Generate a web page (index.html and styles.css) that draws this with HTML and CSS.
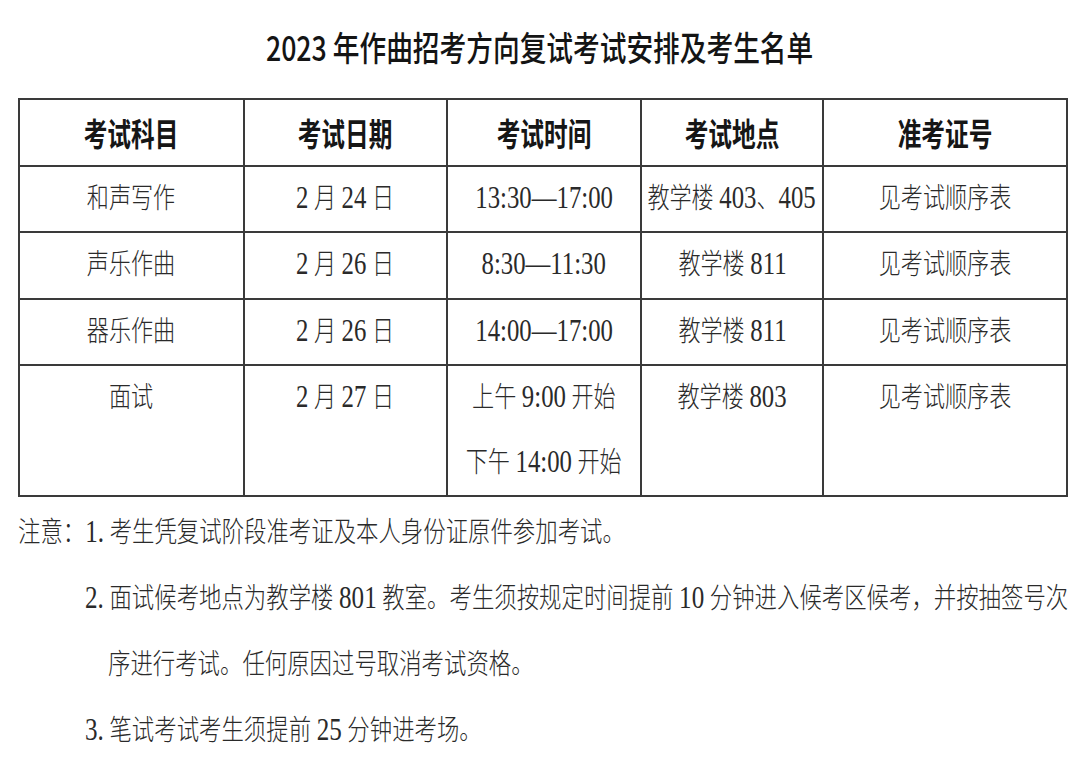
FILE: index.html
```html
<!DOCTYPE html>
<html lang="zh-CN">
<head>
<meta charset="utf-8">
<title>2023年作曲招考方向复试考试安排及考生名单</title>
<link rel="stylesheet" href="styles.css">
</head>
<body>
<div class="page">
  <h1 class="title"><span class="sq">2023 年作曲招考方向复试考试安排及考生名单</span></h1>
  <table class="sched">
    <colgroup>
      <col class="c1"><col class="c2"><col class="c3"><col class="c4"><col class="c5">
    </colgroup>
    <thead>
      <tr>
        <th><div class="cell"><span class="sq">考试科目</span></div></th>
        <th><div class="cell"><span class="sq">考试日期</span></div></th>
        <th><div class="cell"><span class="sq">考试时间</span></div></th>
        <th><div class="cell"><span class="sq">考试地点</span></div></th>
        <th><div class="cell"><span class="sq">准考证号</span></div></th>
      </tr>
    </thead>
    <tbody>
      <tr>
        <td><div class="cell"><span class="sq">和声写作</span></div></td>
        <td><div class="cell"><span class="sq"><span class="num">2</span> 月 <span class="num">24</span> 日</span></div></td>
        <td><div class="cell"><span class="sq"><span class="num">13:30—17:00</span></span></div></td>
        <td><div class="cell"><span class="sq">教学楼 <span class="num">403</span>、<span class="num">405</span></span></div></td>
        <td><div class="cell"><span class="sq">见考试顺序表</span></div></td>
      </tr>
      <tr>
        <td><div class="cell"><span class="sq">声乐作曲</span></div></td>
        <td><div class="cell"><span class="sq"><span class="num">2</span> 月 <span class="num">26</span> 日</span></div></td>
        <td><div class="cell"><span class="sq"><span class="num">8:30—11:30</span></span></div></td>
        <td><div class="cell"><span class="sq">教学楼 <span class="num">811</span></span></div></td>
        <td><div class="cell"><span class="sq">见考试顺序表</span></div></td>
      </tr>
      <tr>
        <td><div class="cell"><span class="sq">器乐作曲</span></div></td>
        <td><div class="cell"><span class="sq"><span class="num">2</span> 月 <span class="num">26</span> 日</span></div></td>
        <td><div class="cell"><span class="sq"><span class="num">14:00—17:00</span></span></div></td>
        <td><div class="cell"><span class="sq">教学楼 <span class="num">811</span></span></div></td>
        <td><div class="cell"><span class="sq">见考试顺序表</span></div></td>
      </tr>
      <tr>
        <td><div class="cell"><span class="sq">面试</span></div></td>
        <td><div class="cell"><span class="sq"><span class="num">2</span> 月 <span class="num">27</span> 日</span></div></td>
        <td>
          <div class="cell"><span class="sq">上午 <span class="num">9:00</span> 开始</span></div>
          <div class="cell"><span class="sq">下午 <span class="num">14:00</span> 开始</span></div>
        </td>
        <td><div class="cell"><span class="sq">教学楼 <span class="num">803</span></span></div></td>
        <td><div class="cell"><span class="sq">见考试顺序表</span></div></td>
      </tr>
    </tbody>
  </table>
  <div class="notes">
    <p class="note first"><span class="sq sl">注意：<span class="num">1.</span> 考生凭复试阶段准考证及本人身份证原件参加考试。</span></p>
    <p class="note item"><span class="sq sl"><span class="num">2.</span> 面试候考地点为教学楼 <span class="num">801</span> 教室。考生须按规定时间提前 <span class="num">10</span> 分钟进入候考区候考，并按抽签号次</span></p>
    <p class="note cont"><span class="sq sl">序进行考试。任何原因过号取消考试资格。</span></p>
    <p class="note item"><span class="sq sl"><span class="num">3.</span> 笔试考试考生须提前 <span class="num">25</span> 分钟进考场。</span></p>
  </div>
</div>
</body>
</html>
```

FILE: styles.css
```css
html, body {
  margin: 0;
  padding: 0;
  background: #ffffff;
  overflow: hidden;
}

.page {
  width: 1080px;
  height: 764px;
  overflow: hidden;
  font-family: "Liberation Serif", "Noto Sans CJK SC", serif;
  color: #2a2a2a;
}

.sq {
  display: inline-block;
  white-space: nowrap;
  transform: scaleX(0.79);
  transform-origin: center center;
}

.sl {
  transform-origin: left center;
}

.num {
  font-size: 1.12em;
  line-height: 1;
}

.title {
  margin: 0;
  padding-top: 14px;
  height: 66px;
  line-height: 66px;
  text-align: center;
  font-family: "Noto Sans CJK SC", sans-serif;
  font-size: 34px;
  font-weight: 500;
  color: #141414;
}

.title .sq {
  transform: scaleX(0.785);
}

.sched {
  margin: 18px 0 0 18px;
  width: 1048px;
  table-layout: fixed;
  border-collapse: collapse;
}

.c1 { width: 225px; }
.c2 { width: 203px; }
.c3 { width: 194px; }
.c4 { width: 182px; }
.c5 { width: 244px; }

.sched th,
.sched td {
  border: 2px solid #3a3a3a;
  padding: 0;
  vertical-align: top;
  line-height: 64.5px;
  white-space: nowrap;
}

.cell {
  display: flex;
  justify-content: center;
  height: 64.5px;
}

.sched th {
  font-family: "Noto Sans CJK SC", sans-serif;
  font-size: 32px;
  font-weight: 700;
  color: #161616;
}

.sched th .sq {
  transform: scaleX(0.74);
}

.sched td {
  font-size: 28px;
  font-weight: 300;
}

.notes {
  padding-top: 3px;
}

.note {
  margin: 0;
  height: 66px;
  line-height: 66px;
  font-size: 28px;
  font-weight: 300;
  white-space: nowrap;
  overflow: hidden;
}

.note .sq {
  transform: scaleX(0.8);
}

.note.first { padding-left: 18px; }
.note.item { padding-left: 85px; }
.note.cont { padding-left: 108px; }
```
